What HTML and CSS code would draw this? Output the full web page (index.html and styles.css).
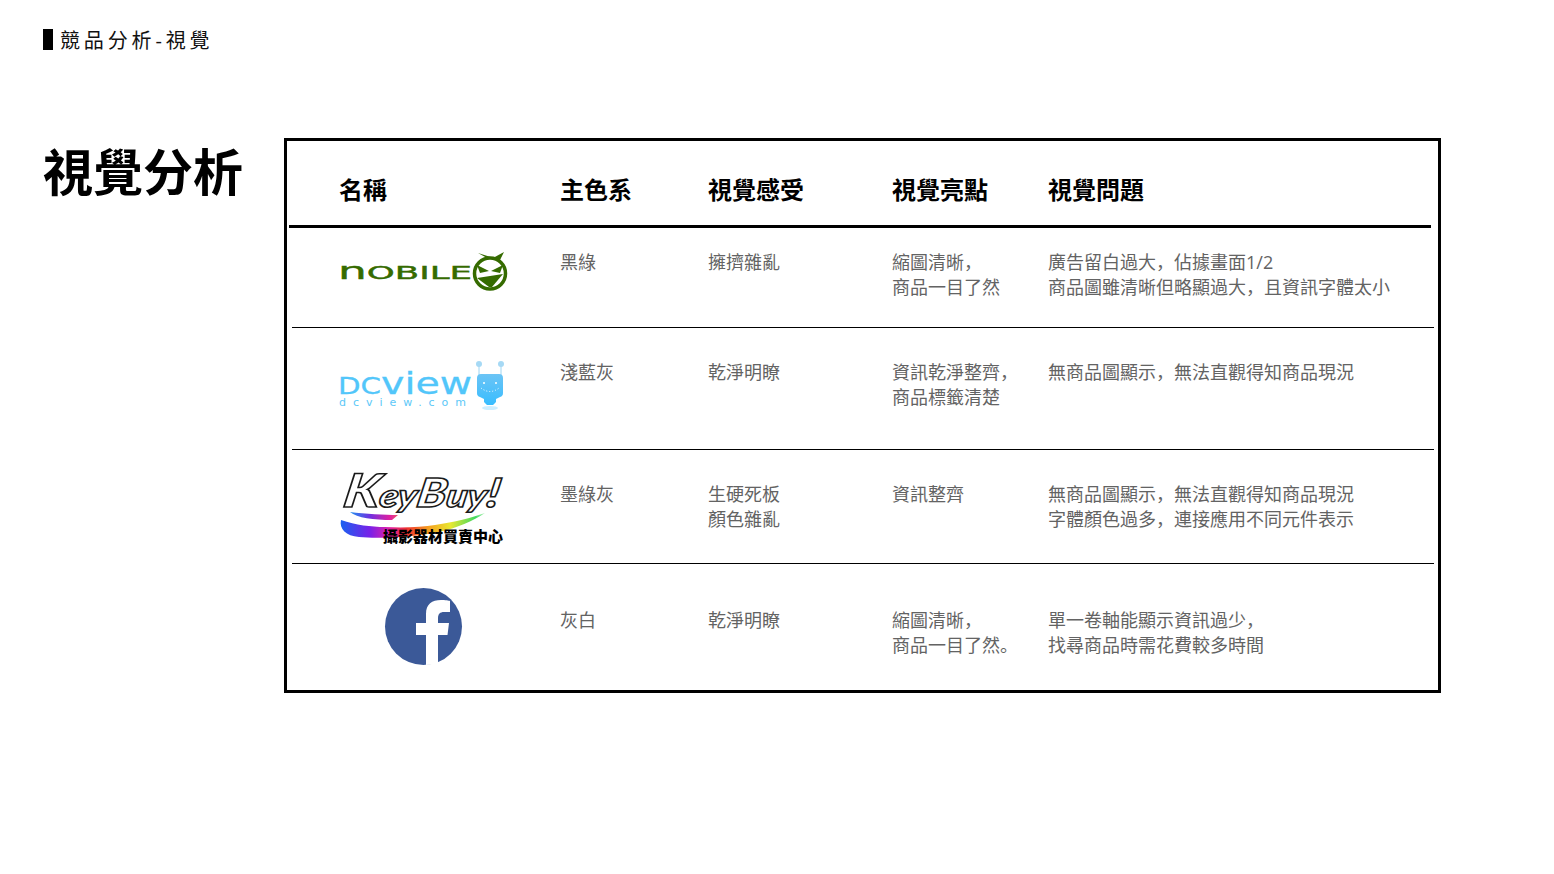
FILE: index.html
```html
<!DOCTYPE html>
<html lang="zh-Hans">
<head>
<meta charset="utf-8">
<title>競品分析-視覺</title>
<link rel="stylesheet" href="styles.css">
</head>
<body>
<main class="page">
  <header class="crumb"><span class="crumb-bar"></span><span class="crumb-text">競品分析-視覺</span></header>
  <section class="content">
    <h1 class="title">視覺分析</h1>
    <div class="frame">
      <div class="grid head">
        <div>名稱</div><div>主色系</div><div>視覺感受</div><div>視覺亮點</div><div>視覺問題</div>
      </div>
      <div class="grid row row-1">
        <div>
          <svg class="logo logo-nobile" viewBox="339 250 170 42" aria-label="Nobile">
            <text x="338" y="279" class="nobile-text" textLength="134" lengthAdjust="spacingAndGlyphs"><tspan class="nobile-n">n</tspan>OBILE</text>
            <path d="M478 253l9 5h6l11-6-4 8z" fill="#356b00"/>
            <circle cx="490" cy="273.500" r="15.500" fill="#fff" stroke="#356b00" stroke-width="3.500"/>
            <path d="M477 265l12 6-9 2zM503 265l-12 6 9 2z" fill="#356b00"/>
            <path d="M477 278l26-4-11 13h-3z" fill="#356b00"/>
          </svg>
        </div>
        <div class="cell">黑綠</div>
        <div class="cell">擁擠雜亂</div>
        <div class="cell">縮圖清晰&#65292;<br>商品一目了然</div>
        <div class="cell">廣告留白過大&#65292;佔據畫面1/2<br>商品圖雖清晰但略顯過大&#65292;且資訊字體太小</div>
      </div>
      <div class="grid row row-2">
        <div>
          <svg class="logo logo-dcview" viewBox="339 360 170 54" aria-label="DCView">
            <defs>
              <linearGradient id="dcbody" x1="0" y1="0" x2="0" y2="1"><stop offset="0" stop-color="#6cc4f5"/><stop offset="1" stop-color="#38bdff"/></linearGradient>
            </defs>
            <text x="338" y="394" class="dc-text" textLength="134" lengthAdjust="spacingAndGlyphs"><tspan class="dc-caps">DC</tspan>view</text>
            <text x="339" y="406" class="dc-small" textLength="133">dcview.com</text>
            <path d="M479 364v12M501 364v12" stroke="#9cd4f2" stroke-width="1"/>
            <circle cx="479" cy="364" r="3" fill="#a6d9f5"/>
            <circle cx="501" cy="364" r="3" fill="#a6d9f5"/>
            <path d="M481 374h18a4 4 0 0 1 4 4v15a4 4 0 0 1-3 4l-4 2v3l-3 3h-6l-3-3v-3l-4-2a4 4 0 0 1-3-4v-15a4 4 0 0 1 4-4z" fill="url(#dcbody)"/>
            <ellipse cx="490" cy="408" rx="8" ry="2" fill="#cdeeff"/>
            <circle cx="484" cy="383" r="1" fill="#fff"/>
            <circle cx="496" cy="383" r="1" fill="#fff"/>
            <path d="M481 388q9 7 18 0" fill="none" stroke="#fff" stroke-width="1" stroke-dasharray="1 2"/>
          </svg>
        </div>
        <div class="cell">淺藍灰</div>
        <div class="cell">乾淨明瞭</div>
        <div class="cell">資訊乾淨整齊&#65292;<br>商品標籤清楚</div>
        <div class="cell">無商品圖顯示&#65292;無法直觀得知商品現況</div>
      </div>
      <div class="grid row row-3">
        <div>
          <svg class="logo logo-keybuy" viewBox="339 470 170 76" aria-label="KeyBuy">
            <defs>
              <linearGradient id="rainbow" gradientUnits="userSpaceOnUse" x1="341" y1="0" x2="487" y2="0">
                <stop offset="0" stop-color="#1a60f0"/><stop offset=".2" stop-color="#7a20e8"/><stop offset=".33" stop-color="#e020a8"/><stop offset=".45" stop-color="#ee3030"/><stop offset=".6" stop-color="#f5a020"/><stop offset=".75" stop-color="#e8e830"/><stop offset=".92" stop-color="#40d860"/><stop offset="1" stop-color="#c8f8c8"/>
              </linearGradient>
              <linearGradient id="rainbow2" gradientUnits="userSpaceOnUse" x1="350" y1="0" x2="400" y2="0">
                <stop offset="0" stop-color="#2090f0"/><stop offset=".4" stop-color="#7030e0"/><stop offset=".8" stop-color="#e020a0"/><stop offset="1" stop-color="#f06060"/>
              </linearGradient>
            </defs>
            <path d="M341 520c15 5 30 7 44 7 20 1 37 0 50-2 20-3 36-7 50-12-12 8-28 15-46 19-24 5-60 7-80 5-13-1-20-8-18-17z" fill="url(#rainbow)"/>
            <path d="M350 512c15 2 35 3 48 3l-6 5c-18 0-35-2-42-8z" fill="url(#rainbow2)"/>
            <text class="kb-text" transform="translate(342 507) skewX(-10)" textLength="156" lengthAdjust="spacingAndGlyphs"><tspan class="kb-big">K</tspan>ey<tspan class="kb-mid">B</tspan>uy<tspan class="kb-mid">!</tspan></text>
            <text x="383" y="542" class="kb-zh">攝影器材買賣中心</text>
          </svg>
        </div>
        <div class="cell">墨綠灰</div>
        <div class="cell">生硬死板<br>顏色雜亂</div>
        <div class="cell">資訊整齊</div>
        <div class="cell">無商品圖顯示&#65292;無法直觀得知商品現況<br>字體顏色過多&#65292;連接應用不同元件表示</div>
      </div>
      <div class="grid row row-4">
        <div>
          <svg class="logo logo-fb" viewBox="385 588 77 77" aria-label="Facebook">
            <circle cx="423.5" cy="626.5" r="38.5" fill="#3b5998"/>
            <path d="M426 665V635H416V623H426V614C426 604 432 600 441 600C445 600 449 600.5 450 601V612H444C440 612 438 614 438 618V623H449L447.5 635H438V664Z" fill="#fff"/>
          </svg>
        </div>
        <div class="cell">灰白</div>
        <div class="cell">乾淨明瞭</div>
        <div class="cell">縮圖清晰&#65292;<br>商品一目了然。</div>
        <div class="cell">單一卷軸能顯示資訊過少&#65292;<br>找尋商品時需花費較多時間</div>
      </div>
    </div>
  </section>
</main>
</body>
</html>
```
FILE: styles.css
```css
* { box-sizing: border-box; }
html, body { margin: 0; padding: 0; background: #fff; }
body { font-family: "Open Sans", "Noto Sans CJK SC", sans-serif; color: #000; }
.page { width: 1554px; height: 874px; padding: 29px 0 0 43px; overflow: hidden; }

.crumb { display: flex; align-items: center; gap: 7px; height: 21px; }
.crumb-bar { width: 10px; height: 21px; background: #000; }
.crumb-text { padding-top: 2px; font-size: 20px; line-height: 23px; letter-spacing: 3.85px; color: #111; }

.content { display: flex; margin-top: 88px; }
.title { width: 241px; margin: 0; font-size: 50px; line-height: 68px; font-weight: 700; }

.frame { width: 1157px; height: 555px; border: 3px solid #000; }
.grid { display: grid; grid-template-columns: 222px 148px 184px 156px 1fr; }
.grid > :nth-child(n+2) { margin-left: -1px; }

.head { height: 87px; margin: 0 7px 0 2px; padding: 31px 0 0 50px; border-bottom: 3px solid #000; font-size: 24px; line-height: 36px; font-weight: 700; }

.row { margin: 0 4px 0 5px; padding-left: 47px; border-bottom: 1px solid #000; font-size: 18px; line-height: 25px; color: #636363; }
.row-1 { height: 100px; }
.row-2 { height: 122px; }
.row-3 { height: 114px; }
.row-4 { height: 126px; border-bottom: 0; }
.row-1 .cell { padding-top: 22px; }
.row-2 .cell, .row-3 .cell { padding-top: 32px; }
.row-4 .cell { padding-top: 44px; }

.logo { display: block; overflow: visible; }
.logo-nobile { width: 170px; height: 42px; margin-top: 22px; }
.logo-dcview { width: 170px; height: 54px; margin-top: 32px; }
.logo-keybuy { width: 170px; height: 76px; margin-top: 20px; }
.logo-fb { width: 77px; height: 77px; margin: 24px 0 0 46px; }

.nobile-text { font-family: "DejaVu Sans", sans-serif; font-size: 18px; fill: #356b00; stroke: #356b00; stroke-width: .4px; }
.nobile-n { font-size: 23px; }
.dc-text { font-family: "DejaVu Sans", sans-serif; font-size: 31px; fill: #52c6fa; stroke: #52c6fa; stroke-width: .3px; }
.dc-caps { font-size: 23px; }
.dc-small { font-family: "DejaVu Sans", sans-serif; font-size: 11px; fill: #5cc8f8; letter-spacing: 6px; }
.kb-text { font-family: "Lato", sans-serif; font-style: italic; font-weight: 900; font-size: 32px; fill: #fff; stroke: #1a1a1a; stroke-width: 1.5px; }
.kb-big { font-size: 46px; }
.kb-mid { font-size: 40px; }
.kb-zh { font-family: "Noto Sans CJK TC", sans-serif; font-size: 15px; font-weight: 900; fill: #000; }
```
